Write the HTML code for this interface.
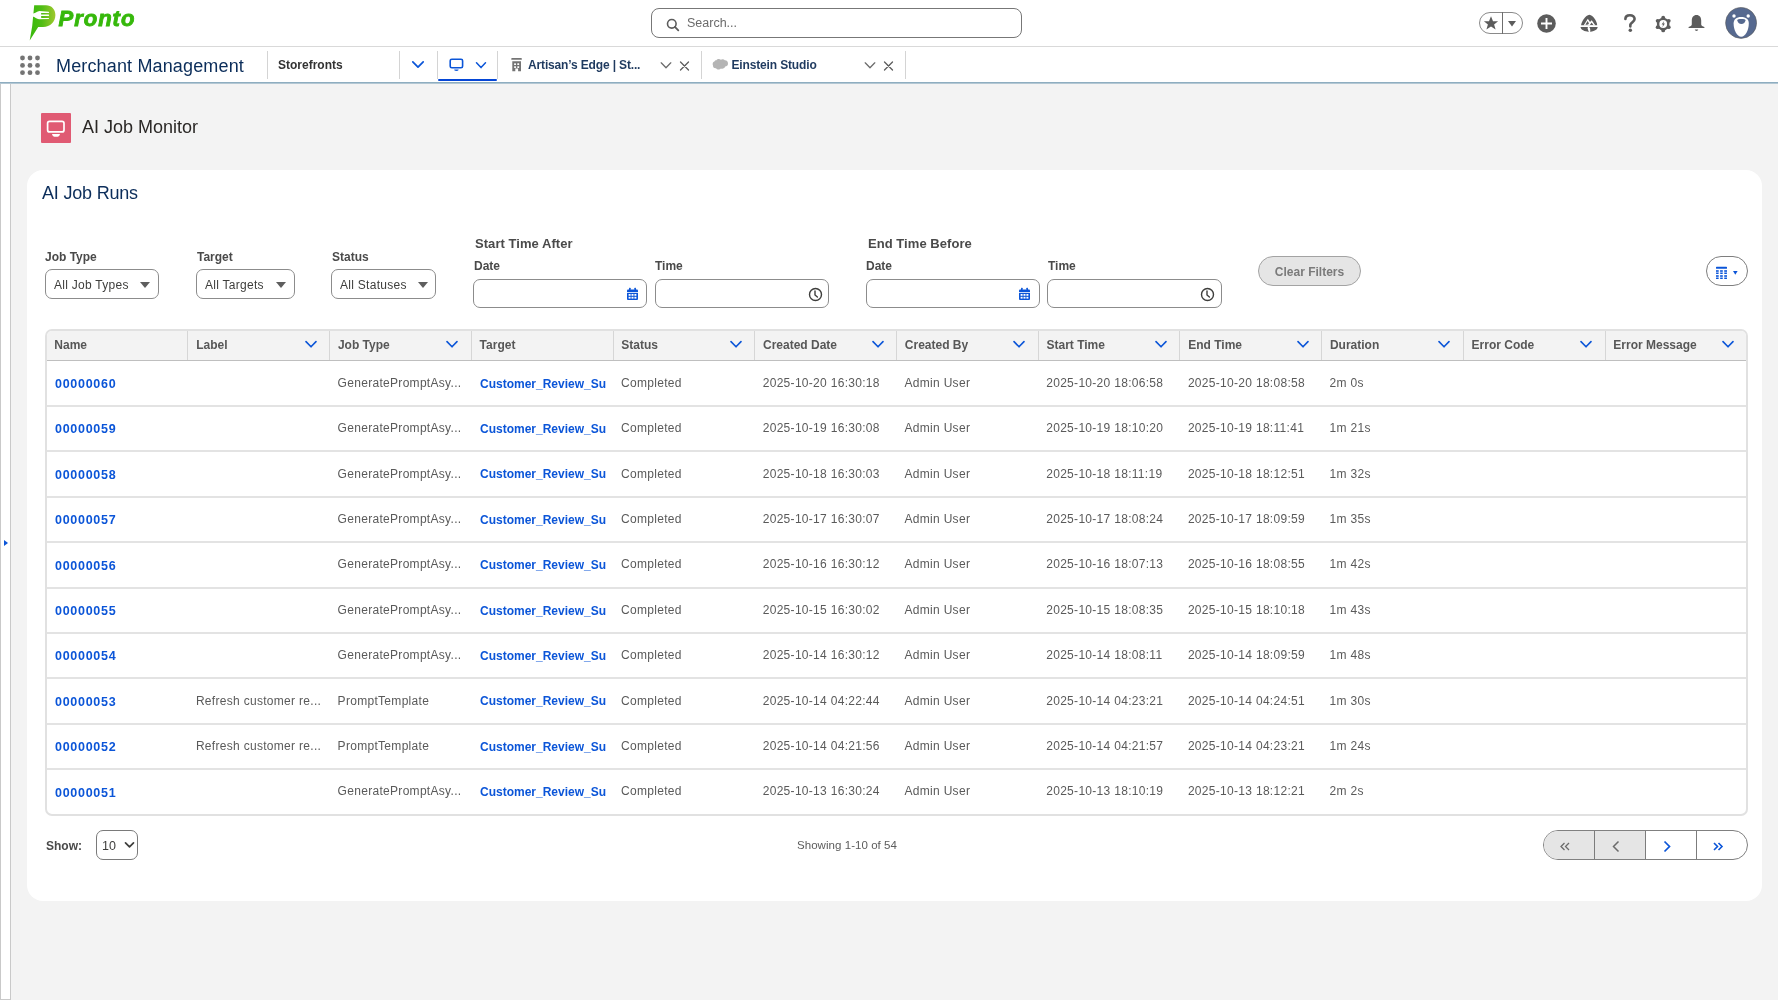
<!DOCTYPE html>
<html><head><meta charset="utf-8">
<style>
*{box-sizing:border-box;margin:0;padding:0}
html,body{width:1778px;height:1000px;overflow:hidden;background:#f3f3f3;font-family:"Liberation Sans",sans-serif;color:#3e3e3c}
.a{position:absolute}
svg{display:block}
#hdr{left:0;top:0;width:1778px;height:47px;background:#fff;border-bottom:1px solid #d9d9d9}
#nav{left:0;top:47px;width:1778px;height:36px;background:#fff;border-bottom:1px solid #8eadc0;box-shadow:0 0 0 0 transparent}
#nav2{left:0;top:83px;width:1778px;height:1px;background:#b3c7d3}
#strip{left:0;top:84px;width:11px;height:916px;background:#fff;border-left:1px solid #c9c9c9;border-right:1px solid #c9c9c9;border-bottom:1px solid #c9c9c9}
.sep{width:1px;background:#d4d4d4}
.tabt{font-size:12px;font-weight:bold;color:#1f3a5f;white-space:nowrap;line-height:14px;letter-spacing:-0.15px}
#card{left:27px;top:170px;width:1735px;height:731px;background:#fff;border-radius:16px}
.lbl{font-size:12px;font-weight:bold;color:#4a4a4a;line-height:14px;white-space:nowrap}
.sel{height:30px;border:1px solid #8c8c8c;border-radius:7px;background:#fff;font-size:12px;color:#3e3e3c;line-height:31px;padding-left:8px;white-space:nowrap;letter-spacing:0.28px}
.tri{width:0;height:0;border-left:5px solid transparent;border-right:5px solid transparent;border-top:6px solid #5e5e5e}
.inp{height:29px;border:1px solid #8c8c8c;border-radius:7px;background:#fff}
#tbl{left:45px;top:329px;width:1703px;height:487px;border:2px solid #e1e1e1;border-radius:7px;overflow:hidden;background:#fff}
#thead{left:0;top:0;width:1699px;height:30px;background:#f3f3f3;border-bottom:1px solid #bfbfbf}
.th{font-size:12px;font-weight:bold;color:#575757;line-height:14px;white-space:nowrap}
.td{font-size:12px;color:#5a5a5a;line-height:14px;white-space:nowrap;letter-spacing:0.3px}
.lnk{font-size:12px;font-weight:bold;color:#0b55d8;line-height:14px;white-space:nowrap;letter-spacing:0.9px}
.rl{left:0;width:1700px;height:1px;background:#dcdcdc}

</style></head>
<body><div id="root" style="position:absolute;left:0;top:0;width:1778px;height:1000px;overflow:hidden;will-change:transform">
<div id="hdr" class="a"></div>
<!-- logo -->
<svg class="a" style="left:0;top:0" width="60" height="45" viewBox="0 0 60 45">
<defs><linearGradient id="lg" x1="30" y1="0" x2="56" y2="0" gradientUnits="userSpaceOnUse"><stop offset="0" stop-color="#38b90b"/><stop offset="0.45" stop-color="#4fbd14"/><stop offset="1" stop-color="#a3c92f"/></linearGradient></defs>
<path d="M34.2 5.2 L46 5.2 C51.5 5.2 55.4 9.3 55.4 14.9 C55.4 21.6 50.2 26.9 43.2 26.9 L38.2 26.9 L29.7 40.4 L32.2 26 Z" fill="url(#lg)"/>
<path d="M31 13.5 L33.2 13.5 C35.6 13.5 37 11 39.5 11 L48.6 11.8 C49.3 11.9 49.3 12.9 48.6 12.9 L41.6 12.9 C40.8 12.9 40.8 14.6 41.6 14.6 L48.6 14.6 C49.3 14.6 49.3 16.1 48.6 16.1 L41.6 16.1 C40.8 16.1 40.8 17.9 41.6 17.9 L48.6 17.9 C49.3 17.9 49.3 18.9 48.6 18.9 L39 19.3 C36.5 19.3 35 16.5 32.5 16.5 L31 16.5 Z" fill="#fff"/>
</svg>
<div class="a" style="left:58.5px;top:6.2px;font-size:22px;font-weight:bold;font-style:italic;color:#36b80b;letter-spacing:1px;-webkit-text-stroke:0.9px #36b80b;line-height:26px">Pronto</div>
<!-- search -->
<div class="a" style="left:651px;top:8px;width:371px;height:30px;border:1px solid #777;border-radius:8px;background:#fff"></div>
<svg class="a" style="left:666px;top:18px" width="14" height="14" viewBox="0 0 14 14"><circle cx="5.8" cy="5.8" r="4.3" fill="none" stroke="#5c5c5c" stroke-width="1.6"/><path d="M8.9 8.9 L12.3 12.3" stroke="#5c5c5c" stroke-width="1.8" stroke-linecap="round"/></svg>
<div class="a" style="left:687px;top:16px;font-size:12.5px;color:#6b6b6b;line-height:14px">Search...</div>
<!-- favorites -->
<div class="a" style="left:1479px;top:12px;width:44px;height:22px;border:1px solid #8a8a8a;border-radius:11px;background:#fff"></div>
<div class="a" style="left:1502px;top:12px;width:1px;height:22px;background:#6e6e6e"></div>
<svg class="a" style="left:1483px;top:15px" width="16" height="16" viewBox="0 0 16 16"><path d="M8 1.3 L10 6.2 L15.1 6.3 L11.1 9.5 L12.6 14.6 L8 11.6 L3.4 14.6 L4.9 9.5 L0.9 6.3 L6 6.2 Z" fill="#5c5c5c"/></svg>
<svg class="a" style="left:1507px;top:20px" width="10" height="8" viewBox="0 0 10 8"><path d="M1 1 L9 1 L5 6.5 Z" fill="#5c5c5c"/></svg>
<!-- plus -->
<svg class="a" style="left:1537px;top:14px" width="19" height="19" viewBox="0 0 19 19"><circle cx="9.5" cy="9.5" r="9.3" fill="#5c5c5c"/><path d="M9.5 4 V15 M4 9.5 H15" stroke="#fff" stroke-width="1.9"/></svg>
<!-- trailhead -->
<svg class="a" style="left:1576px;top:11px" width="26" height="24" viewBox="0 0 26 24">
<path d="M5.1 14.3 C5.6 10 9.5 4.6 13.4 3.8 C17.3 4.6 20.8 10 21.2 14.3 Z" fill="#5c5c5c"/>
<path d="M7.6 14.4 L11.8 7.8 L14 11 L15.7 9.2 L19.4 14.4 Z" fill="#fff"/>
<path d="M9.4 13.8 L11.6 10 L12.9 12.3 C12.9 13.4 11.6 13.8 9.4 13.8 Z" fill="#5c5c5c"/>
<path d="M13.9 14 L15.6 11.4 L17.4 14 Z" fill="#5c5c5c"/>
<path d="M4.5 16.1 L11.9 16.1 L11.6 17.4 L12.8 20.9 C8.6 20.6 4.8 18.9 4.5 16.1 Z" fill="#5c5c5c"/>
<path d="M13.3 16.1 L21.7 16.1 C21.4 19 17.8 20.5 14.4 20.9 L14.1 17.6 Z" fill="#5c5c5c"/>
</svg>
<!-- help -->
<svg class="a" style="left:1622px;top:13px" width="16" height="21" viewBox="0 0 16 21"><path d="M3.4 6 C3.4 3.5 5.3 2.2 7.9 2.2 C10.6 2.2 12.6 3.8 12.6 6.1 C12.6 8.7 9.3 9.4 8.4 11.6 L8.3 13.4" fill="none" stroke="#5c5c5c" stroke-width="2.6" stroke-linecap="round" stroke-linejoin="round"/><circle cx="8.3" cy="17.3" r="1.75" fill="#5c5c5c"/></svg>
<!-- gear -->
<svg class="a" style="left:1654px;top:15px" width="18" height="18" viewBox="0 0 18 18">
<g fill="#5c5c5c"><circle cx="9.2" cy="9" r="6.3"/>
<circle cx="9.2" cy="2.6" r="1.9"/><circle cx="9.2" cy="15.4" r="1.9"/>
<circle cx="3.66" cy="5.8" r="1.9"/><circle cx="14.74" cy="5.8" r="1.9"/>
<circle cx="3.66" cy="12.2" r="1.9"/><circle cx="14.74" cy="12.2" r="1.9"/></g>
<circle cx="9.2" cy="9" r="3.9" fill="#fff"/>
<path d="M10.1 6 L7.6 9.6 L9.1 9.6 L8.4 12.2 L10.9 8.5 L9.4 8.5 Z" fill="#5c5c5c"/>
</svg>
<!-- bell -->
<svg class="a" style="left:1687px;top:14px" width="19" height="18" viewBox="0 0 19 18"><path d="M9.5 1 C12.5 1 14.2 3.3 14.2 6.5 L14.2 10.5 C14.2 11.6 15.6 12.3 17.4 13 L17.4 14 L1.6 14 L1.6 13 C3.4 12.3 4.8 11.6 4.8 10.5 L4.8 6.5 C4.8 3.3 6.5 1 9.5 1 Z" fill="#5c5c5c"/><path d="M7.8 15.6 L11.2 15.6 C11 16.6 10.3 17 9.5 17 C8.7 17 8 16.6 7.8 15.6Z" fill="#5c5c5c"/></svg>
<!-- avatar -->
<svg class="a" style="left:1725px;top:7px" width="32" height="32" viewBox="0 0 32 32"><circle cx="16.1" cy="15.9" r="15.5" fill="#56698f" stroke="#5a5a5a" stroke-width="0.6"/>
<circle cx="9" cy="9" r="1.7" fill="#fff"/><circle cx="23.2" cy="9" r="1.7" fill="#fff"/>
<path d="M16.2 10.1 C21 10.1 23.8 12.3 23.8 16.5 C23.8 23 20.5 29.7 16.2 29.7 C11.9 29.7 8.6 23 8.6 16.5 C8.6 12.3 11.4 10.1 16.2 10.1 Z" fill="#fff"/>
<path d="M12.4 13.2 C12.4 12.3 14 12.1 16.4 12.1 C18.8 12.1 20.4 12.3 20.4 13.2 C20.4 15.4 18.5 17 16.4 17 C14.3 17 12.4 15.4 12.4 13.2 Z" fill="#56698f"/>
</svg>
<div id="nav" class="a"></div><div id="nav2" class="a"></div>
<!-- app launcher dots -->
<svg class="a" style="left:19px;top:55px" width="22" height="22" viewBox="0 0 22 22">
<g fill="#747474"><circle cx="3.5" cy="3" r="2.4"/><circle cx="11" cy="3" r="2.4"/><circle cx="18.5" cy="3" r="2.4"/>
<circle cx="3.5" cy="10.4" r="2.4"/><circle cx="11" cy="10.4" r="2.4"/><circle cx="18.5" cy="10.4" r="2.4"/>
<circle cx="3.5" cy="17.7" r="2.4"/><circle cx="11" cy="17.7" r="2.4"/><circle cx="18.5" cy="17.7" r="2.4"/></g></svg>
<div class="a" style="left:56px;top:55px;font-size:18px;color:#0b2d5a;line-height:22px;letter-spacing:0.15px;white-space:nowrap">Merchant Management</div>
<div class="a sep" style="left:267px;top:51px;height:28px"></div>
<div class="a tabt" style="left:278px;top:58px;color:#333;letter-spacing:0">Storefronts</div>
<div class="a sep" style="left:399px;top:51px;height:28px"></div>
<svg class="a" style="left:411px;top:60px" width="14" height="10" viewBox="0 0 14 10"><path d="M1.8 1.8 L7 7.2 L12.2 1.8" fill="none" stroke="#0b55d8" stroke-width="1.7" stroke-linecap="round" stroke-linejoin="round"/></svg>
<div class="a sep" style="left:437px;top:51px;height:28px"></div>
<svg class="a" style="left:449px;top:58px" width="15" height="14" viewBox="0 0 15 14"><rect x="1.2" y="1.2" width="12.4" height="8.6" rx="1.6" fill="none" stroke="#0b55d8" stroke-width="1.6"/><path d="M5.2 11.6 H9.6 C9.4 12.8 8.6 13 7.4 13 C6.2 13 5.4 12.8 5.2 11.6Z" fill="#0b55d8"/></svg>
<svg class="a" style="left:475px;top:61px" width="12" height="9" viewBox="0 0 12 9"><path d="M1.5 1.8 L6 6.6 L10.5 1.8" fill="none" stroke="#0b55d8" stroke-width="1.5" stroke-linecap="round" stroke-linejoin="round"/></svg>
<div class="a" style="left:438px;top:78.6px;width:59px;height:2.6px;background:#0546d6;border-radius:1.3px"></div>
<div class="a sep" style="left:497px;top:51px;height:28px"></div>
<!-- artisan tab -->
<svg class="a" style="left:510px;top:57px" width="13" height="16" viewBox="0 0 13 16"><g fill="#747474"><rect x="1.2" y="1" width="10.7" height="1.8" rx="0.9"/><path d="M2.3 4.3 H11 V14.2 H8.1 V11.4 H5.3 V14.2 H2.3 Z"/></g><g fill="#fff"><rect x="4.1" y="6.3" width="1.9" height="1.8" rx="0.4"/><rect x="7.3" y="6.3" width="1.9" height="1.8" rx="0.4"/><rect x="4.1" y="9.2" width="1.9" height="1.7" rx="0.4"/><rect x="7.3" y="9.2" width="1.9" height="1.7" rx="0.4"/></g></svg>
<div class="a tabt" style="left:528px;top:58px">Artisan’s Edge | St...</div>
<svg class="a" style="left:660px;top:61px" width="12" height="9" viewBox="0 0 12 9"><path d="M1.2 1.8 L6 6.8 L10.8 1.8" fill="none" stroke="#6b6b6b" stroke-width="1.25" stroke-linecap="round" stroke-linejoin="round"/></svg>
<svg class="a" style="left:679px;top:61px" width="11" height="10" viewBox="0 0 11 10"><path d="M1.5 1 L9.5 9 M9.5 1 L1.5 9" fill="none" stroke="#5c5c5c" stroke-width="1.3" stroke-linecap="round"/></svg>
<div class="a sep" style="left:701px;top:51px;height:28px"></div>
<!-- einstein tab -->
<svg class="a" style="left:712px;top:58px" width="17" height="13" viewBox="0 0 17 13"><path d="M4.5 2.2 C5.5 0.8 7.8 0.8 8.8 1.8 C10 0.9 12 1 12.8 2.3 C14.8 2.2 16.2 3.8 16 5.8 C16 7.6 14.6 8.6 13.2 8.6 C12.6 10.4 10.6 11.2 8.8 10.4 C7.8 11.8 5 11.8 4 10.2 C2 10.4 0.8 9 1 7.4 C0.2 6 0.8 4 2.4 3.6 C2.8 2.6 3.6 2.1 4.5 2.2Z" fill="#b4b4b4"/></svg>
<div class="a tabt" style="left:731.5px;top:58px">Einstein Studio</div>
<svg class="a" style="left:864px;top:61px" width="12" height="9" viewBox="0 0 12 9"><path d="M1.2 1.8 L6 6.8 L10.8 1.8" fill="none" stroke="#6b6b6b" stroke-width="1.25" stroke-linecap="round" stroke-linejoin="round"/></svg>
<svg class="a" style="left:883px;top:61px" width="11" height="10" viewBox="0 0 11 10"><path d="M1.5 1 L9.5 9 M9.5 1 L1.5 9" fill="none" stroke="#5c5c5c" stroke-width="1.3" stroke-linecap="round"/></svg>
<div class="a sep" style="left:905px;top:51px;height:28px"></div>
<div id="strip" class="a"></div>
<svg class="a" style="left:3px;top:539px" width="6" height="8" viewBox="0 0 6 8"><path d="M1 1 L5 4 L1 7 Z" fill="#0b55d8"/></svg>
<div class="a" style="left:41px;top:113px;width:29.5px;height:29.6px;background:#e05a73;border-radius:1px"></div>
<svg class="a" style="left:41px;top:113px" width="30" height="30" viewBox="0 0 30 30"><rect x="6.6" y="8.3" width="16.4" height="10.6" rx="2" fill="none" stroke="#fff" stroke-width="1.7"/><path d="M11 21 H19 C18.8 23 17.4 23.8 15 23.8 C12.6 23.8 11.2 23 11 21Z" fill="#fff"/></svg>
<div class="a" style="left:82px;top:116px;font-size:18px;color:#2b2826;line-height:22px;white-space:nowrap">AI Job Monitor</div>
<div id="card" class="a"></div>
<div class="a" style="left:42px;top:182px;font-size:18px;color:#0b2d5a;line-height:22px;white-space:nowrap;letter-spacing:-0.2px">AI Job Runs</div>
<div class="a lbl" style="left:45px;top:250px">Job Type</div>
<div class="a sel" style="left:45px;top:269px;width:114px">All Job Types</div>
<div class="a tri" style="left:140px;top:282px"></div>
<div class="a lbl" style="left:197px;top:250px">Target</div>
<div class="a sel" style="left:196px;top:269px;width:99px">All Targets</div>
<div class="a tri" style="left:275.5px;top:282px"></div>
<div class="a lbl" style="left:332px;top:250px">Status</div>
<div class="a sel" style="left:331px;top:269px;width:105px">All Statuses</div>
<div class="a tri" style="left:417.5px;top:282px"></div>

<div class="a lbl" style="left:475px;top:237px;font-size:13px;letter-spacing:0.05px">Start Time After</div>
<div class="a lbl" style="left:474px;top:259px">Date</div>
<div class="a inp" style="left:473px;top:279px;width:174px"></div>
<svg class="a" style="left:626px;top:287px" width="13" height="14" viewBox="0 0 13 14"><rect x="1" y="2.6" width="11" height="10.4" rx="1" fill="#0b55d8"/><rect x="3" y="0.8" width="1.6" height="3" rx="0.5" fill="#0b55d8"/><rect x="8.4" y="0.8" width="1.6" height="3" rx="0.5" fill="#0b55d8"/><rect x="1" y="5.2" width="11" height="0.8" fill="#fff"/><g fill="#fff"><rect x="2.6" y="7" width="2" height="1.8"/><rect x="5.5" y="7" width="2" height="1.8"/><rect x="8.4" y="7" width="2" height="1.8"/><rect x="2.6" y="9.8" width="2" height="1.8"/><rect x="5.5" y="9.8" width="2" height="1.8"/><rect x="8.4" y="9.8" width="2" height="1.8"/></g></svg>
<div class="a lbl" style="left:655px;top:259px">Time</div>
<div class="a inp" style="left:655px;top:279px;width:174px"></div>
<svg class="a" style="left:808px;top:287px" width="15" height="15" viewBox="0 0 15 15"><circle cx="7.5" cy="7.5" r="6" fill="none" stroke="#3e3e3c" stroke-width="1.4"/><path d="M7 4 V8 L9.4 10" fill="none" stroke="#3e3e3c" stroke-width="1.4" stroke-linecap="round"/></svg>

<div class="a lbl" style="left:868px;top:237px;font-size:13px;letter-spacing:0.05px">End Time Before</div>
<div class="a lbl" style="left:866px;top:259px">Date</div>
<div class="a inp" style="left:866px;top:279px;width:174px"></div>
<svg class="a" style="left:1018px;top:287px" width="13" height="14" viewBox="0 0 13 14"><rect x="1" y="2.6" width="11" height="10.4" rx="1" fill="#0b55d8"/><rect x="3" y="0.8" width="1.6" height="3" rx="0.5" fill="#0b55d8"/><rect x="8.4" y="0.8" width="1.6" height="3" rx="0.5" fill="#0b55d8"/><rect x="1" y="5.2" width="11" height="0.8" fill="#fff"/><g fill="#fff"><rect x="2.6" y="7" width="2" height="1.8"/><rect x="5.5" y="7" width="2" height="1.8"/><rect x="8.4" y="7" width="2" height="1.8"/><rect x="2.6" y="9.8" width="2" height="1.8"/><rect x="5.5" y="9.8" width="2" height="1.8"/><rect x="8.4" y="9.8" width="2" height="1.8"/></g></svg>
<div class="a lbl" style="left:1048px;top:259px">Time</div>
<div class="a inp" style="left:1047px;top:279px;width:175px"></div>
<svg class="a" style="left:1200px;top:287px" width="15" height="15" viewBox="0 0 15 15"><circle cx="7.5" cy="7.5" r="6" fill="none" stroke="#3e3e3c" stroke-width="1.4"/><path d="M7 4 V8 L9.4 10" fill="none" stroke="#3e3e3c" stroke-width="1.4" stroke-linecap="round"/></svg>

<div class="a" style="left:1258px;top:256px;width:103px;height:30px;border:1px solid #a3a3a3;border-radius:15px;background:#e5e5e5;font-size:12px;font-weight:bold;color:#7a7a7a;text-align:center;line-height:31px;white-space:nowrap">Clear Filters</div>
<div class="a" style="left:1706px;top:256px;width:42px;height:30px;border:1px solid #7e7e7e;border-radius:15px;background:#fff"></div>
<svg class="a" style="left:1715px;top:265px" width="24" height="16" viewBox="0 0 24 16"><g fill="#0b55d8"><rect x="1" y="1.8" width="11" height="2" rx="0.6"/>
<g opacity="0.8"><rect x="1" y="5" width="2.7" height="2.6"/><rect x="5.1" y="5" width="2.7" height="2.6"/><rect x="9.2" y="5" width="2.8" height="2.6"/>
<rect x="1" y="10" width="2.7" height="2.4"/><rect x="5.1" y="10" width="2.7" height="2.4"/><rect x="9.2" y="10" width="2.8" height="2.4"/></g>
<rect x="1" y="8" width="2.7" height="1.1" rx="0.5"/><rect x="5.1" y="8" width="2.7" height="1.1" rx="0.5"/><rect x="9.2" y="8" width="2.8" height="1.1" rx="0.5"/><rect x="1" y="12.8" width="2.7" height="1.1" rx="0.5"/><rect x="5.1" y="12.8" width="2.7" height="1.1" rx="0.5"/><rect x="9.2" y="12.8" width="2.8" height="1.1" rx="0.5"/>
<path d="M18 6.1 H22.6 L20.3 9.7 Z"/></g></svg>
<div class="a lbl" style="left:46px;top:838.5px">Show:</div>
<div class="a" style="left:96px;top:830px;width:42px;height:30px;border:1px solid #7a7a7a;border-radius:7px;background:#fff;font-size:12.5px;color:#3e3e3c;line-height:30px;padding-left:5px">10</div>
<svg class="a" style="left:124px;top:841px" width="11" height="8" viewBox="0 0 11 8"><path d="M1.5 1.8 L5.5 5.8 L9.5 1.8" fill="none" stroke="#3e3e3c" stroke-width="1.7" stroke-linecap="round" stroke-linejoin="round"/></svg>
<div class="a" style="left:797px;top:838px;font-size:11.5px;color:#5c5c5c;line-height:14px;white-space:nowrap;letter-spacing:0.05px">Showing 1-10 of 54</div>
<div class="a" style="left:1543px;top:830px;width:205px;height:30px;border:1px solid #808080;border-radius:15px;background:#fff;overflow:hidden">
<div class="a" style="left:0;top:0;width:101px;height:28px;background:#e5e5e5"></div>
<div class="a" style="left:50px;top:0;width:1px;height:28px;background:#7c7c7c"></div>
<div class="a" style="left:101px;top:0;width:1px;height:28px;background:#7c7c7c"></div>
<div class="a" style="left:152px;top:0;width:1px;height:28px;background:#7c7c7c"></div>
</div>
<svg class="a" style="left:1559px;top:841px" width="12" height="11" viewBox="0 0 12 11"><path d="M5.5 2 L2 5.5 L5.5 9 M10 2 L6.5 5.5 L10 9" fill="none" stroke="#6b6b6b" stroke-width="1.3"/></svg>
<svg class="a" style="left:1611px;top:840px" width="10" height="13" viewBox="0 0 10 13"><path d="M7.5 1.5 L2.5 6.5 L7.5 11.5" fill="none" stroke="#6b6b6b" stroke-width="1.5"/></svg>
<svg class="a" style="left:1662px;top:840px" width="10" height="13" viewBox="0 0 10 13"><path d="M2.5 1.5 L7.5 6.5 L2.5 11.5" fill="none" stroke="#0b55d8" stroke-width="1.7"/></svg>
<svg class="a" style="left:1712px;top:841px" width="12" height="11" viewBox="0 0 12 11"><path d="M2 2 L5.5 5.5 L2 9 M6.5 2 L10 5.5 L6.5 9" fill="none" stroke="#0b55d8" stroke-width="1.6"/></svg>
<div id="tbl" class="a"><div id="thead" class="a"></div></div>
<div class="a" style="left:187.4px;top:331px;width:1px;height:29px;background:#d6d6d6"></div>
<div class="a" style="left:329.1px;top:331px;width:1px;height:29px;background:#d6d6d6"></div>
<div class="a" style="left:470.8px;top:331px;width:1px;height:29px;background:#d6d6d6"></div>
<div class="a" style="left:612.5px;top:331px;width:1px;height:29px;background:#d6d6d6"></div>
<div class="a" style="left:754.2px;top:331px;width:1px;height:29px;background:#d6d6d6"></div>
<div class="a" style="left:896.0px;top:331px;width:1px;height:29px;background:#d6d6d6"></div>
<div class="a" style="left:1037.7px;top:331px;width:1px;height:29px;background:#d6d6d6"></div>
<div class="a" style="left:1179.4px;top:331px;width:1px;height:29px;background:#d6d6d6"></div>
<div class="a" style="left:1321.1px;top:331px;width:1px;height:29px;background:#d6d6d6"></div>
<div class="a" style="left:1462.8px;top:331px;width:1px;height:29px;background:#d6d6d6"></div>
<div class="a" style="left:1604.5px;top:331px;width:1px;height:29px;background:#d6d6d6"></div>
<div class="a th" style="left:54.3px;top:337.8px">Name</div>
<div class="a th" style="left:196.2px;top:337.8px">Label</div>
<svg class="a" style="left:304.6px;top:340px" width="12" height="9" viewBox="0 0 12 9"><path d="M1 1.6 L6 6.8 L11 1.6" fill="none" stroke="#0b55d8" stroke-width="1.6" stroke-linecap="round" stroke-linejoin="round"/></svg>
<div class="a th" style="left:337.9px;top:337.8px">Job Type</div>
<svg class="a" style="left:446.3px;top:340px" width="12" height="9" viewBox="0 0 12 9"><path d="M1 1.6 L6 6.8 L11 1.6" fill="none" stroke="#0b55d8" stroke-width="1.6" stroke-linecap="round" stroke-linejoin="round"/></svg>
<div class="a th" style="left:479.6px;top:337.8px">Target</div>
<div class="a th" style="left:621.3px;top:337.8px">Status</div>
<svg class="a" style="left:729.7px;top:340px" width="12" height="9" viewBox="0 0 12 9"><path d="M1 1.6 L6 6.8 L11 1.6" fill="none" stroke="#0b55d8" stroke-width="1.6" stroke-linecap="round" stroke-linejoin="round"/></svg>
<div class="a th" style="left:763.0px;top:337.8px">Created Date</div>
<svg class="a" style="left:871.5px;top:340px" width="12" height="9" viewBox="0 0 12 9"><path d="M1 1.6 L6 6.8 L11 1.6" fill="none" stroke="#0b55d8" stroke-width="1.6" stroke-linecap="round" stroke-linejoin="round"/></svg>
<div class="a th" style="left:904.8px;top:337.8px">Created By</div>
<svg class="a" style="left:1013.2px;top:340px" width="12" height="9" viewBox="0 0 12 9"><path d="M1 1.6 L6 6.8 L11 1.6" fill="none" stroke="#0b55d8" stroke-width="1.6" stroke-linecap="round" stroke-linejoin="round"/></svg>
<div class="a th" style="left:1046.5px;top:337.8px">Start Time</div>
<svg class="a" style="left:1154.9px;top:340px" width="12" height="9" viewBox="0 0 12 9"><path d="M1 1.6 L6 6.8 L11 1.6" fill="none" stroke="#0b55d8" stroke-width="1.6" stroke-linecap="round" stroke-linejoin="round"/></svg>
<div class="a th" style="left:1188.2px;top:337.8px">End Time</div>
<svg class="a" style="left:1296.6px;top:340px" width="12" height="9" viewBox="0 0 12 9"><path d="M1 1.6 L6 6.8 L11 1.6" fill="none" stroke="#0b55d8" stroke-width="1.6" stroke-linecap="round" stroke-linejoin="round"/></svg>
<div class="a th" style="left:1329.9px;top:337.8px">Duration</div>
<svg class="a" style="left:1438.3px;top:340px" width="12" height="9" viewBox="0 0 12 9"><path d="M1 1.6 L6 6.8 L11 1.6" fill="none" stroke="#0b55d8" stroke-width="1.6" stroke-linecap="round" stroke-linejoin="round"/></svg>
<div class="a th" style="left:1471.6px;top:337.8px">Error Code</div>
<svg class="a" style="left:1580.0px;top:340px" width="12" height="9" viewBox="0 0 12 9"><path d="M1 1.6 L6 6.8 L11 1.6" fill="none" stroke="#0b55d8" stroke-width="1.6" stroke-linecap="round" stroke-linejoin="round"/></svg>
<div class="a th" style="left:1613.3px;top:337.8px">Error Message</div>
<svg class="a" style="left:1722.0px;top:340px" width="12" height="9" viewBox="0 0 12 9"><path d="M1 1.6 L6 6.8 L11 1.6" fill="none" stroke="#0b55d8" stroke-width="1.6" stroke-linecap="round" stroke-linejoin="round"/></svg>
<div class="a lnk" style="left:55.0px;top:376.9px;font-size:12.5px;letter-spacing:0.72px">00000060</div>
<div class="a td" style="left:337.6px;top:375.7px">GeneratePromptAsy...</div>
<div class="a lnk" style="left:480.0px;top:376.6px;width:126px;overflow:hidden;letter-spacing:0">Customer_Review_Summary</div>
<div class="a td" style="left:621.0px;top:375.7px">Completed</div>
<div class="a td" style="left:762.7px;top:375.7px">2025-10-20 16:30:18</div>
<div class="a td" style="left:904.5px;top:375.7px">Admin User</div>
<div class="a td" style="left:1046.2px;top:375.7px">2025-10-20 18:06:58</div>
<div class="a td" style="left:1187.9px;top:375.7px">2025-10-20 18:08:58</div>
<div class="a td" style="left:1329.6px;top:375.7px">2m 0s</div>
<div class="a" style="left:47px;top:405px;width:1699px;height:2px;background:#e3e3e3"></div>
<div class="a lnk" style="left:55.0px;top:422.3px;font-size:12.5px;letter-spacing:0.72px">00000059</div>
<div class="a td" style="left:337.6px;top:421.1px">GeneratePromptAsy...</div>
<div class="a lnk" style="left:480.0px;top:422.0px;width:126px;overflow:hidden;letter-spacing:0">Customer_Review_Summary</div>
<div class="a td" style="left:621.0px;top:421.1px">Completed</div>
<div class="a td" style="left:762.7px;top:421.1px">2025-10-19 16:30:08</div>
<div class="a td" style="left:904.5px;top:421.1px">Admin User</div>
<div class="a td" style="left:1046.2px;top:421.1px">2025-10-19 18:10:20</div>
<div class="a td" style="left:1187.9px;top:421.1px">2025-10-19 18:11:41</div>
<div class="a td" style="left:1329.6px;top:421.1px">1m 21s</div>
<div class="a" style="left:47px;top:450px;width:1699px;height:2px;background:#e3e3e3"></div>
<div class="a lnk" style="left:55.0px;top:467.7px;font-size:12.5px;letter-spacing:0.72px">00000058</div>
<div class="a td" style="left:337.6px;top:466.5px">GeneratePromptAsy...</div>
<div class="a lnk" style="left:480.0px;top:467.4px;width:126px;overflow:hidden;letter-spacing:0">Customer_Review_Summary</div>
<div class="a td" style="left:621.0px;top:466.5px">Completed</div>
<div class="a td" style="left:762.7px;top:466.5px">2025-10-18 16:30:03</div>
<div class="a td" style="left:904.5px;top:466.5px">Admin User</div>
<div class="a td" style="left:1046.2px;top:466.5px">2025-10-18 18:11:19</div>
<div class="a td" style="left:1187.9px;top:466.5px">2025-10-18 18:12:51</div>
<div class="a td" style="left:1329.6px;top:466.5px">1m 32s</div>
<div class="a" style="left:47px;top:496px;width:1699px;height:2px;background:#e3e3e3"></div>
<div class="a lnk" style="left:55.0px;top:513.1px;font-size:12.5px;letter-spacing:0.72px">00000057</div>
<div class="a td" style="left:337.6px;top:511.9px">GeneratePromptAsy...</div>
<div class="a lnk" style="left:480.0px;top:512.8px;width:126px;overflow:hidden;letter-spacing:0">Customer_Review_Summary</div>
<div class="a td" style="left:621.0px;top:511.9px">Completed</div>
<div class="a td" style="left:762.7px;top:511.9px">2025-10-17 16:30:07</div>
<div class="a td" style="left:904.5px;top:511.9px">Admin User</div>
<div class="a td" style="left:1046.2px;top:511.9px">2025-10-17 18:08:24</div>
<div class="a td" style="left:1187.9px;top:511.9px">2025-10-17 18:09:59</div>
<div class="a td" style="left:1329.6px;top:511.9px">1m 35s</div>
<div class="a" style="left:47px;top:541px;width:1699px;height:2px;background:#e3e3e3"></div>
<div class="a lnk" style="left:55.0px;top:558.5px;font-size:12.5px;letter-spacing:0.72px">00000056</div>
<div class="a td" style="left:337.6px;top:557.3px">GeneratePromptAsy...</div>
<div class="a lnk" style="left:480.0px;top:558.2px;width:126px;overflow:hidden;letter-spacing:0">Customer_Review_Summary</div>
<div class="a td" style="left:621.0px;top:557.3px">Completed</div>
<div class="a td" style="left:762.7px;top:557.3px">2025-10-16 16:30:12</div>
<div class="a td" style="left:904.5px;top:557.3px">Admin User</div>
<div class="a td" style="left:1046.2px;top:557.3px">2025-10-16 18:07:13</div>
<div class="a td" style="left:1187.9px;top:557.3px">2025-10-16 18:08:55</div>
<div class="a td" style="left:1329.6px;top:557.3px">1m 42s</div>
<div class="a" style="left:47px;top:587px;width:1699px;height:2px;background:#e3e3e3"></div>
<div class="a lnk" style="left:55.0px;top:603.9px;font-size:12.5px;letter-spacing:0.72px">00000055</div>
<div class="a td" style="left:337.6px;top:602.7px">GeneratePromptAsy...</div>
<div class="a lnk" style="left:480.0px;top:603.6px;width:126px;overflow:hidden;letter-spacing:0">Customer_Review_Summary</div>
<div class="a td" style="left:621.0px;top:602.7px">Completed</div>
<div class="a td" style="left:762.7px;top:602.7px">2025-10-15 16:30:02</div>
<div class="a td" style="left:904.5px;top:602.7px">Admin User</div>
<div class="a td" style="left:1046.2px;top:602.7px">2025-10-15 18:08:35</div>
<div class="a td" style="left:1187.9px;top:602.7px">2025-10-15 18:10:18</div>
<div class="a td" style="left:1329.6px;top:602.7px">1m 43s</div>
<div class="a" style="left:47px;top:632px;width:1699px;height:2px;background:#e3e3e3"></div>
<div class="a lnk" style="left:55.0px;top:649.3px;font-size:12.5px;letter-spacing:0.72px">00000054</div>
<div class="a td" style="left:337.6px;top:648.1px">GeneratePromptAsy...</div>
<div class="a lnk" style="left:480.0px;top:649.0px;width:126px;overflow:hidden;letter-spacing:0">Customer_Review_Summary</div>
<div class="a td" style="left:621.0px;top:648.1px">Completed</div>
<div class="a td" style="left:762.7px;top:648.1px">2025-10-14 16:30:12</div>
<div class="a td" style="left:904.5px;top:648.1px">Admin User</div>
<div class="a td" style="left:1046.2px;top:648.1px">2025-10-14 18:08:11</div>
<div class="a td" style="left:1187.9px;top:648.1px">2025-10-14 18:09:59</div>
<div class="a td" style="left:1329.6px;top:648.1px">1m 48s</div>
<div class="a" style="left:47px;top:677px;width:1699px;height:2px;background:#e3e3e3"></div>
<div class="a lnk" style="left:55.0px;top:694.7px;font-size:12.5px;letter-spacing:0.72px">00000053</div>
<div class="a td" style="left:195.9px;top:693.5px">Refresh customer re...</div>
<div class="a td" style="left:337.6px;top:693.5px">PromptTemplate</div>
<div class="a lnk" style="left:480.0px;top:694.4px;width:126px;overflow:hidden;letter-spacing:0">Customer_Review_Summary</div>
<div class="a td" style="left:621.0px;top:693.5px">Completed</div>
<div class="a td" style="left:762.7px;top:693.5px">2025-10-14 04:22:44</div>
<div class="a td" style="left:904.5px;top:693.5px">Admin User</div>
<div class="a td" style="left:1046.2px;top:693.5px">2025-10-14 04:23:21</div>
<div class="a td" style="left:1187.9px;top:693.5px">2025-10-14 04:24:51</div>
<div class="a td" style="left:1329.6px;top:693.5px">1m 30s</div>
<div class="a" style="left:47px;top:723px;width:1699px;height:2px;background:#e3e3e3"></div>
<div class="a lnk" style="left:55.0px;top:740.1px;font-size:12.5px;letter-spacing:0.72px">00000052</div>
<div class="a td" style="left:195.9px;top:738.9px">Refresh customer re...</div>
<div class="a td" style="left:337.6px;top:738.9px">PromptTemplate</div>
<div class="a lnk" style="left:480.0px;top:739.8px;width:126px;overflow:hidden;letter-spacing:0">Customer_Review_Summary</div>
<div class="a td" style="left:621.0px;top:738.9px">Completed</div>
<div class="a td" style="left:762.7px;top:738.9px">2025-10-14 04:21:56</div>
<div class="a td" style="left:904.5px;top:738.9px">Admin User</div>
<div class="a td" style="left:1046.2px;top:738.9px">2025-10-14 04:21:57</div>
<div class="a td" style="left:1187.9px;top:738.9px">2025-10-14 04:23:21</div>
<div class="a td" style="left:1329.6px;top:738.9px">1m 24s</div>
<div class="a" style="left:47px;top:768px;width:1699px;height:2px;background:#e3e3e3"></div>
<div class="a lnk" style="left:55.0px;top:785.5px;font-size:12.5px;letter-spacing:0.72px">00000051</div>
<div class="a td" style="left:337.6px;top:784.3px">GeneratePromptAsy...</div>
<div class="a lnk" style="left:480.0px;top:785.2px;width:126px;overflow:hidden;letter-spacing:0">Customer_Review_Summary</div>
<div class="a td" style="left:621.0px;top:784.3px">Completed</div>
<div class="a td" style="left:762.7px;top:784.3px">2025-10-13 16:30:24</div>
<div class="a td" style="left:904.5px;top:784.3px">Admin User</div>
<div class="a td" style="left:1046.2px;top:784.3px">2025-10-13 18:10:19</div>
<div class="a td" style="left:1187.9px;top:784.3px">2025-10-13 18:12:21</div>
<div class="a td" style="left:1329.6px;top:784.3px">2m 2s</div>

</div></body></html>
